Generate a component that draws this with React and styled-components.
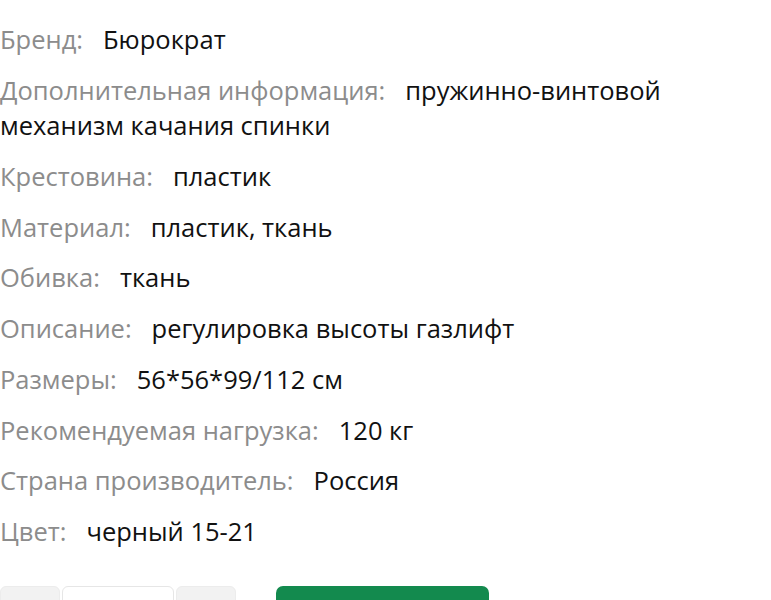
import React from 'react';
import styled, { createGlobalStyle } from 'styled-components';

const GlobalStyle = createGlobalStyle`
  html, body {
    margin: 0;
    padding: 0;
    background: #ffffff;
  }
  body {
    font-family: "Open Sans", "Noto Sans", sans-serif;
  }
`;

const Page = styled.div`
  padding: 22px 0 0 0;
  width: 771px;
  overflow: hidden;
`;

const PropList = styled.ul`
  list-style: none;
  margin: 0;
  padding: 0;
`;

const PropItem = styled.li`
  font-size: 25.5px;
  line-height: 1.4;
  color: #111111;
  margin-bottom: 15px;
`;

const PropLabel = styled.span`
  color: #8c8c8c;
  margin-right: 20px;
`;

const Actions = styled.div`
  display: flex;
  align-items: flex-start;
  margin-top: 36px;
`;

const Stepper = styled.div`
  display: flex;
  gap: 2px;
`;

const StepButton = styled.button`
  width: 60px;
  height: 48px;
  border: 1px solid #ececec;
  background: #f2f2f2;
  border-radius: 6px;
  padding: 0;
`;

const QtyInput = styled.input`
  width: 112px;
  height: 48px;
  box-sizing: border-box;
  border: 1px solid #e6e6e6;
  background: #ffffff;
  border-radius: 6px;
  text-align: center;
  font-family: inherit;
  font-size: 20px;
`;

const BuyButton = styled.button`
  margin-left: 40px;
  width: 213px;
  height: 48px;
  border: none;
  border-radius: 7px;
  background: #138a4e;
  color: #ffffff;
  font-family: inherit;
  font-size: 20px;
`;

const props = [
  ['Бренд:', 'Бюрократ'],
  ['Дополнительная информация:', 'пружинно-винтовой механизм качания спинки'],
  ['Крестовина:', 'пластик'],
  ['Материал:', 'пластик, ткань'],
  ['Обивка:', 'ткань'],
  ['Описание:', 'регулировка высоты газлифт'],
  ['Размеры:', '56*56*99/112 см'],
  ['Рекомендуемая нагрузка:', '120 кг'],
  ['Страна производитель:', 'Россия'],
  ['Цвет:', 'черный 15-21'],
];

export default function App() {
  return (
    <>
      <GlobalStyle />
      <Page>
        <PropList>
          {props.map(([label, value]) => (
            <PropItem key={label}>
              <PropLabel>{label}</PropLabel>
              {value}
            </PropItem>
          ))}
        </PropList>
        <Actions>
          <Stepper>
            <StepButton />
            <QtyInput defaultValue="" />
            <StepButton />
          </Stepper>
          <BuyButton />
        </Actions>
      </Page>
    </>
  );
}
